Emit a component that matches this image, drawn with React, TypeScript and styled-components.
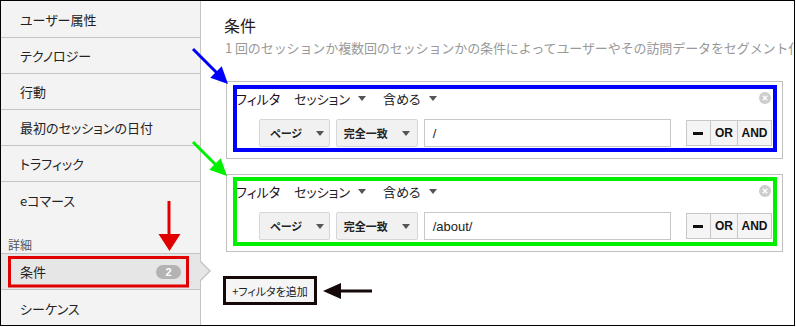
import React from 'react';
import styled, { createGlobalStyle } from 'styled-components';

const GlobalStyle = createGlobalStyle`
  html, body { margin: 0; padding: 0; background: #fff; }
  body {
    font-family: "Noto Sans CJK JP", "Liberation Sans", sans-serif;
    font-feature-settings: "palt";
    color: #222;
  }
`;

const Frame = styled.div`
  position: relative;
  width: 795px;
  height: 326px;
  box-sizing: border-box;
  border: 1px solid #000;
  display: flex;
  overflow: hidden;
  background: #fff;
`;

const Sidebar = styled.nav`
  width: 200px;
  flex: none;
  box-sizing: border-box;
  background: #f3f3f3;
  border-right: 1px solid #c4c4c4;
  padding-top: 1px;
  display: flex;
  flex-direction: column;
`;

const NavItem = styled.div<{ $selected?: boolean; $noBorder?: boolean }>`
  position: relative;
  height: 36px;
  flex: none;
  box-sizing: border-box;
  display: flex;
  align-items: center;
  padding-left: 19px;
  padding-right: 19px;
  font-size: 13px;
  color: #222;
  border-bottom: ${p => (p.$noBorder ? 'none' : '1px solid #c4c4c4')};
  background: ${p => (p.$selected ? '#e6e6e6' : 'transparent')};
  ${p =>
    p.$selected &&
    `
    &::before {
      content: '';
      position: absolute;
      right: -11px;
      top: 7px;
      border-style: solid;
      border-width: 10px 0 10px 10px;
      border-color: transparent transparent transparent #c4c4c4;
    }
    &::after {
      content: '';
      position: absolute;
      right: -9px;
      top: 8px;
      border-style: solid;
      border-width: 9px 0 9px 9px;
      border-color: transparent transparent transparent #e6e6e6;
    }
  `}
`;

const NavHeader = styled.div`
  height: 36px;
  flex: none;
  box-sizing: border-box;
  display: flex;
  align-items: flex-end;
  padding-left: 7px;
  padding-bottom: 1px;
  font-size: 12px;
  line-height: 14px;
  color: #555;
  border-bottom: 1px solid #c4c4c4;
`;

const Badge = styled.span`
  margin-left: auto;
  width: 25px;
  height: 14px;
  border-radius: 7px;
  background: #b3b3b3;
  color: #fff;
  font-family: "Liberation Sans", sans-serif;
  font-weight: bold;
  font-size: 11px;
  line-height: 14px;
  text-align: center;
`;

const Main = styled.main`
  flex: 1;
  min-width: 0;
  padding: 14px 0 0 23px;
  display: flex;
  flex-direction: column;
  align-items: flex-start;
`;

const Title = styled.h2`
  margin: 0;
  font-size: 16px;
  line-height: 20px;
  font-weight: normal;
  color: #2a1a1a;
`;

const Subtitle = styled.p`
  margin: 4px 0 0 1px;
  font-size: 13px;
  line-height: 18px;
  color: #999;
  white-space: nowrap;
  font-feature-settings: normal;
  letter-spacing: -0.1px;
`;

const FilterBox = styled.section<{ $first?: boolean }>`
  width: 557px;
  box-sizing: border-box;
  margin: ${p => (p.$first ? '24px' : '15px')} 0 0 2px;
  border: 1px solid #c0c0c0;
  padding: 6px 10px 11px 9px;
  display: flex;
  flex-direction: column;
`;

const HeadRow = styled.div`
  height: 20px;
  display: flex;
  align-items: center;
  font-size: 13px;
`;

const FilterLabel = styled.span`
  color: #1e0d1e;
  margin-right: 14px;
`;

const DropText = styled.span`
  display: inline-flex;
  align-items: center;
  gap: 8px;
  margin-right: 17px;
  color: #222;
`;

const CloseIcon = styled.span`
  margin-left: auto;
  margin-right: 1px;
  width: 12px;
  height: 12px;
  display: inline-flex;
`;

const CondRow = styled.div`
  margin-top: 11px;
  padding-left: 23px;
  height: 28px;
  display: flex;
  align-items: center;
`;

const SelectButton = styled.div<{ $w: number; $pl: number; $pr: number }>`
  width: ${p => p.$w}px;
  height: 28px;
  box-sizing: border-box;
  display: flex;
  align-items: center;
  justify-content: space-between;
  padding: 0 ${p => p.$pr}px 0 ${p => p.$pl}px;
  background: #f1f1f1;
  border: 1px solid #d6d6d6;
  border-radius: 2px;
  font-size: 11px;
  font-weight: bold;
  color: #222;
  margin-right: 6px;
`;

const ValueInput = styled.div`
  width: 248px;
  height: 28px;
  box-sizing: border-box;
  border: 1px solid #c8c8c8;
  background: #fff;
  display: flex;
  align-items: center;
  padding-left: 8px;
  font-family: "Liberation Sans", sans-serif;
  font-size: 13px;
  color: #222;
`;

const OpGroup = styled.div`
  margin-left: 15px;
  height: 26px;
  display: flex;
  border: 1px solid #c8c8c8;
  box-sizing: border-box;
  background: #f5f5f5;
`;

const OpButton = styled.div<{ $w: number }>`
  width: ${p => p.$w}px;
  display: flex;
  align-items: center;
  justify-content: center;
  font-family: "Liberation Sans", sans-serif;
  font-weight: bold;
  font-size: 12px;
  color: #111;
  & + & { border-left: 1px solid #c8c8c8; }
`;

const AddButton = styled.div`
  margin: 27px 0 0 2px;
  width: 88px;
  height: 24px;
  box-sizing: border-box;
  background: #f5f5f5;
  display: flex;
  align-items: center;
  justify-content: center;
  font-size: 11px;
  color: #222;
`;

const Overlay = styled.svg`
  position: absolute;
  left: -1px;
  top: -1px;
  pointer-events: none;
`;

const Caret = () => (
  <svg width="8" height="5" viewBox="0 0 8 5">
    <path d="M0 0 L8 0 L4 5 Z" fill="#555" />
  </svg>
);

const Close = () => (
  <svg width="12" height="12" viewBox="0 0 12 12">
    <circle cx="6" cy="6" r="6" fill="#cdcdcd" />
    <path d="M3.8 3.8 L8.2 8.2 M8.2 3.8 L3.8 8.2" stroke="#fff" strokeWidth="1.4" />
  </svg>
);

const Minus = () => (
  <svg width="10" height="3" viewBox="0 0 10 3">
    <rect width="10" height="3" fill="#111" />
  </svg>
);

const Filter = ({ value, first }: { value: string; first?: boolean }) => (
  <FilterBox $first={first}>
    <HeadRow>
      <FilterLabel>フィルタ</FilterLabel>
      <DropText>
        セッション <Caret />
      </DropText>
      <DropText>
        含める <Caret />
      </DropText>
      <CloseIcon>
        <Close />
      </CloseIcon>
    </HeadRow>
    <CondRow>
      <SelectButton $w={71} $pl={10} $pr={5}>
        ページ <Caret />
      </SelectButton>
      <SelectButton $w={82} $pl={7} $pr={7}>
        完全一致 <Caret />
      </SelectButton>
      <ValueInput>{value}</ValueInput>
      <OpGroup>
        <OpButton $w={23}>
          <Minus />
        </OpButton>
        <OpButton $w={26}>OR</OpButton>
        <OpButton $w={33}>AND</OpButton>
      </OpGroup>
    </CondRow>
  </FilterBox>
);

const navItems = ['ユーザー属性', 'テクノロジー', '行動', '最初のセッションの日付', 'トラフィック'];

export default function App() {
  return (
    <>
      <GlobalStyle />
      <Frame>
        <Sidebar>
          {navItems.map(t => (
            <NavItem key={t}>{t}</NavItem>
          ))}
          <NavItem $noBorder>eコマース</NavItem>
          <NavHeader>詳細</NavHeader>
          <NavItem $selected>
            条件<Badge>2</Badge>
          </NavItem>
          <NavItem $noBorder>シーケンス</NavItem>
        </Sidebar>
        <Main>
          <Title>条件</Title>
          <Subtitle>1 回のセッションか複数回のセッションかの条件によってユーザーやその訪問データをセグメント化</Subtitle>
          <Filter value="/" first />
          <Filter value="/about/" />
          <AddButton>+フィルタを追加</AddButton>
        </Main>
        <Overlay width="796" height="327" viewBox="0 0 796 327">
          <g fill="none" strokeWidth="3">
            <rect x="9.5" y="257.5" width="178" height="28.5" stroke="#e00000" />
            <rect x="235" y="87" width="540" height="63" stroke="#0000ff" strokeWidth="4" />
            <rect x="235" y="179" width="540" height="65" stroke="#00f000" strokeWidth="4" />
            <rect x="224.5" y="277.5" width="91" height="26" stroke="#140808" />
            <line x1="193" y1="49" x2="218" y2="74" stroke="#0000ff" />
            <line x1="193" y1="142" x2="217" y2="166" stroke="#00f000" />
            <line x1="169" y1="201" x2="169" y2="236" stroke="#e00000" />
            <line x1="338" y1="291" x2="372" y2="291" stroke="#140808" />
          </g>
          <polygon points="228,84 210.3,77.7 221.7,66.3" fill="#0000ff" />
          <polygon points="227,176 209.3,169.7 220.7,158.3" fill="#00f000" />
          <polygon points="158.5,234 180.5,234 169.5,251" fill="#e00000" />
          <polygon points="323,291 341,283 341,299" fill="#140808" />
        </Overlay>
      </Frame>
    </>
  );
}
